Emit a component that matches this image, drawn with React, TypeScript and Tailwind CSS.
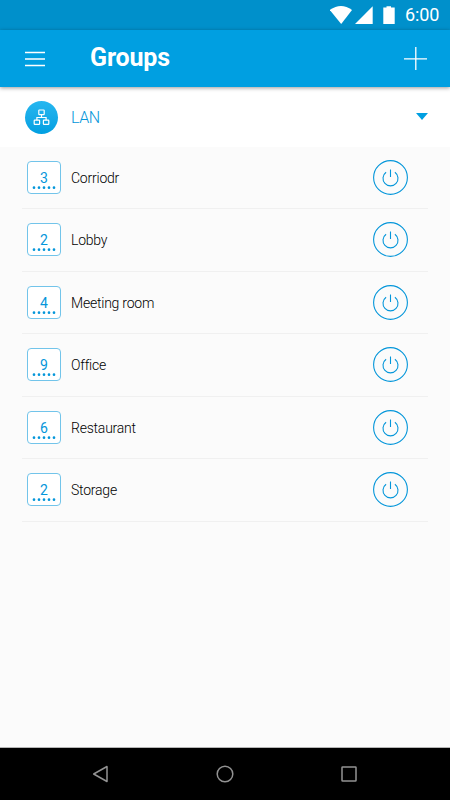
import { useState } from "react";

interface Group {
  id: number;
  name: string;
  count: number;
}

const groups: Group[] = [
  { id: 1, name: "Corriodr", count: 3 },
  { id: 2, name: "Lobby", count: 2 },
  { id: 3, name: "Meeting room", count: 4 },
  { id: 4, name: "Office", count: 9 },
  { id: 5, name: "Restaurant", count: 6 },
  { id: 6, name: "Storage", count: 2 },
];

function StatusBar() {
  return (
    <div className="flex h-[30px] shrink-0 items-center justify-end bg-[#0090cb] pr-[10px] text-white">
      <svg width="75" height="30" viewBox="0 0 75 30" fill="currentColor">
        <path d="M-.3 10Q11 2 22 10L11.2 24Z" />
        <path d="M42.7 6.3V24H25Z" />
        <path d="M53.3 7.5H56.5V6.3H61V7.5H64.7V24H53.3Z" />
      </svg>
      <span className="w-[35px] whitespace-nowrap text-[18px] leading-[30px] tracking-[-0.1px]">6:00</span>
    </div>
  );
}

function PowerButton({ label }: { label: string }) {
  const [on, setOn] = useState(false);

  return (
    <button
      onClick={() => setOn(!on)}
      aria-label={label}
      aria-pressed={on}
      className="h-[35px] w-[35px] cursor-pointer text-[#0496da]"
    >
      <svg width="35" height="35" viewBox="0 0 35 35" fill="none" stroke="currentColor">
        <circle cx="17.5" cy="17.5" r="16.9" strokeWidth="1.1" />
        <path d="M17.5 9.5V17" strokeWidth="1.1" />
        <path d="M13.1 12.3A7.5 7.5 0 1 0 21.9 12.3" strokeWidth="1.1" />
      </svg>
    </button>
  );
}

function GroupTile({ count }: { count: number }) {
  return (
    <div className="flex h-[33px] w-[34px] flex-col items-center rounded-[4px] border border-[#72c4ea] bg-white pt-[8px]">
      <span className="text-[14px] leading-[16px] text-[#0496da]">{count}</span>
      <svg width="24" height="4" viewBox="0 0 24 4" fill="#0496da">
        {[2, 7, 12, 17, 22].map((x) => (
          <circle key={x} cx={x} cy="1.7" r="1.35" />
        ))}
      </svg>
    </div>
  );
}

export default function App() {
  return (
    <div className="flex h-[800px] w-[450px] flex-col overflow-hidden bg-[#fbfbfb] font-['Roboto',sans-serif]">
      <StatusBar />

      <header className="z-10 flex h-[57px] shrink-0 items-center bg-[#009fe1] pl-[25px] pr-[23px] text-white shadow-[0_1px_4px_rgba(0,0,0,0.4)]">
        <button aria-label="Menu" className="cursor-pointer pt-px">
          <svg width="20" height="16" viewBox="0 0 20 16" stroke="currentColor" strokeWidth="1.3">
            <path d="M0 1.5H20M0 8H20M0 14.5H20" />
          </svg>
        </button>
        <h1 className="ml-[45px] flex-1 pb-px text-[25px] font-bold leading-[30px] tracking-[-0.15px]">Groups</h1>
        <button aria-label="Add group" className="cursor-pointer">
          <svg width="23" height="23" viewBox="0 0 23 23" stroke="currentColor" strokeWidth="1.3">
            <path d="M0 11.8H23M11.8 0V23" />
          </svg>
        </button>
      </header>

      <div className="flex h-[59.5px] shrink-0 items-center bg-white pb-px pl-[25px] pr-[22.5px] pt-[1.5px] text-[#0496da]">
        <div className="flex h-[33px] w-[33px] items-center justify-center rounded-full bg-linear-to-b from-[#25b7f0] to-[#009fe1] text-white">
          <svg width="17" height="17" viewBox="0 0 17 17" fill="none" stroke="currentColor" strokeWidth="1.2">
            <rect x="5.8" y="1" width="5.4" height="4.6" rx="0.6" />
            <rect x="1.2" y="11.2" width="5.4" height="4.2" rx="0.6" />
            <rect x="10.4" y="11.2" width="5.4" height="4.2" rx="0.6" />
            <path d="M8.5 5.6V8.5M3.9 11.2V8.5H13.1V11.2" />
          </svg>
        </div>
        <span className="ml-[13px] flex-1 pt-[2px] text-[16px] font-light leading-[24px] tracking-[-0.4px]">LAN</span>
        <svg width="12" height="8" viewBox="0 0 12 8" fill="#009fe1">
          <path d="M0 0H12L6 7Z" />
        </svg>
      </div>

      <ul className="flex-1 pl-[22px] pr-[22px]">
        {groups.map((group) => (
          <li
            key={group.id}
            className="flex h-[62.5px] items-center border-b border-[#f0f0f0] pl-[5px] pr-[20px]"
          >
            <GroupTile count={group.count} />
            <span className="ml-[10px] flex-1 pt-px text-[14px] font-light leading-[20px] tracking-[-0.22px] text-black">
              {group.name}
            </span>
            <PowerButton label={group.name} />
          </li>
        ))}
      </ul>

      <nav className="flex h-[53px] shrink-0 items-start justify-between border-t border-[#b5b5b5] bg-black pl-[92px] pr-[93px] pt-[17px] text-[#929292]">
        <svg width="17" height="18" viewBox="0 0 17 18" fill="none" stroke="currentColor" strokeWidth="1.5">
          <path d="M15 1.5V16.5L1.7 9Z" strokeLinejoin="round" />
        </svg>
        <svg width="18" height="18" viewBox="0 0 18 18" fill="none" stroke="currentColor" strokeWidth="1.5">
          <circle cx="9" cy="9" r="7.8" />
        </svg>
        <svg width="16" height="18" viewBox="0 0 16 18" fill="none" stroke="currentColor" strokeWidth="1.5">
          <rect x="1" y="2" width="14" height="14" rx="0.6" />
        </svg>
      </nav>
    </div>
  );
}
